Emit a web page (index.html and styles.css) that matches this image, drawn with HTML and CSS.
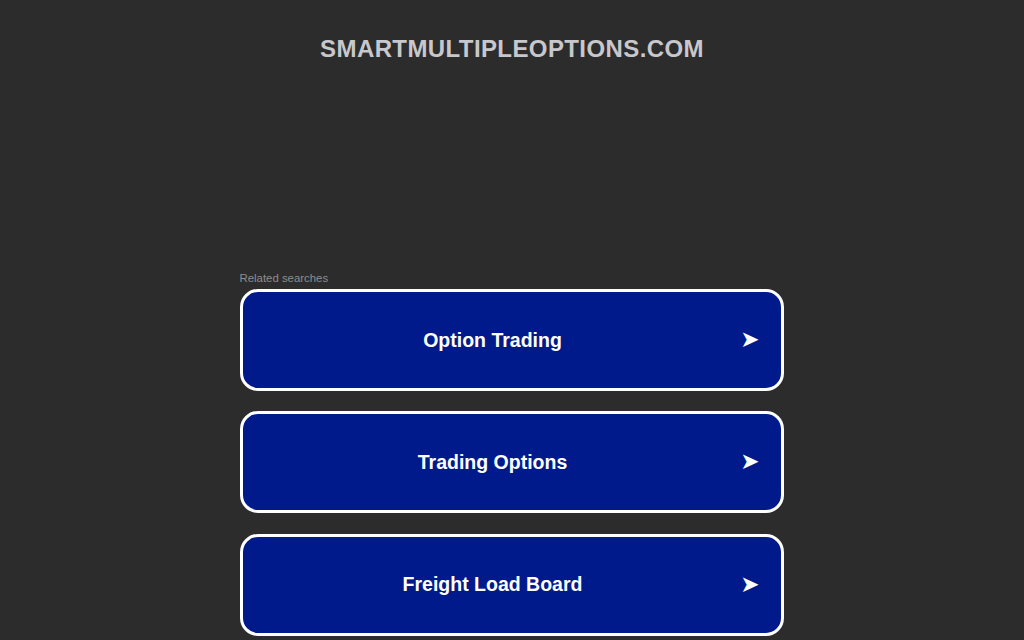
FILE: index.html
```html
<!DOCTYPE html>
<html>
<head>
<meta charset="utf-8">
<link rel="stylesheet" href="styles.css">
</head>
<body>
<div class="page">
  <header class="header">
    <h1 class="domain">smartmultipleoptions.com</h1>
  </header>
  <main class="content">
    <div class="related">Related searches</div>
    <ul class="links">
      <li><a class="link" href="#"><span class="label">Option Trading</span><span class="arrow">➤</span></a></li>
      <li><a class="link" href="#"><span class="label">Trading Options</span><span class="arrow">➤</span></a></li>
      <li><a class="link" href="#"><span class="label">Freight Load Board</span><span class="arrow">➤</span></a></li>
    </ul>
  </main>
</div>
</body>
</html>
```
FILE: styles.css
```css
html, body {
  margin: 0;
  padding: 0;
  background: #2c2c2c;
  height: 100%;
  overflow: hidden;
}
body {
  font-family: "Liberation Sans", Arial, sans-serif;
}
.page {
  display: flex;
  flex-direction: column;
  align-items: center;
}
.header {
  padding-top: 34px;
  height: 237px;
  box-sizing: border-box;
}
.domain {
  margin: 0;
  font-size: 24px;
  line-height: 30px;
  font-weight: bold;
  text-transform: uppercase;
  color: #c8c8cc;
  letter-spacing: 0.4px;
}
.content {
  width: 544px;
  margin-left: -1px;
}
.related {
  font-size: 11.4px;
  color: #8c8c8c;
  line-height: 13px;
  padding-top: 35px;
  margin-bottom: 4px;
}
.links {
  list-style: none;
  margin: 0;
  padding: 0;
  display: flex;
  flex-direction: column;
  gap: 20.3px;
}
.link {
  box-sizing: border-box;
  height: 102px;
  display: flex;
  align-items: center;
  justify-content: center;
  padding-right: 38px;
  position: relative;
  background: #011a8b;
  border: 3px solid #ffffff;
  border-radius: 18px;
  color: #ffffff;
  text-decoration: none;
  font-size: 19.5px;
  font-weight: bold;
}
.arrow {
  position: absolute;
  right: 21px;
  top: 50%;
  transform: translateY(-52%);
  font-size: 23px;
  font-family: "DejaVu Sans", sans-serif;
}
```
